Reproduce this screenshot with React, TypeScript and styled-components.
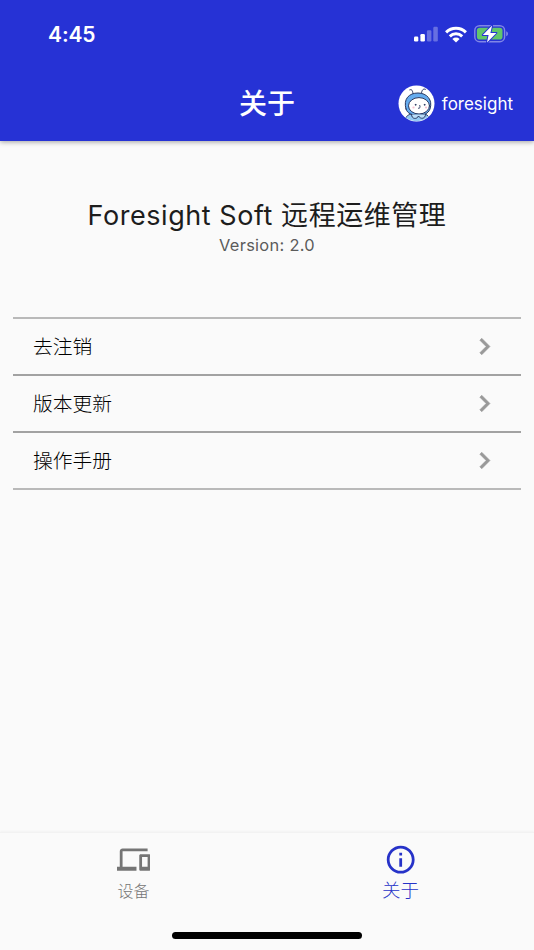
import React from "react";
import styled, { createGlobalStyle } from "styled-components";

const GlobalStyle = createGlobalStyle`
  * { box-sizing: border-box; }
  body { margin: 0; background: #fafafa; font-family: Inter, "Noto Sans CJK SC", sans-serif; }
`;

const Screen = styled.div`
  width: 534px;
  height: 950px;
  display: flex;
  flex-direction: column;
  background: #fafafa;
  overflow: hidden;
`;

const Header = styled.header`
  height: 141px;
  flex: none;
  background: #2632d5;
  color: #fff;
  box-shadow: 0 1px 5px rgba(0, 0, 0, 0.36);
`;

const StatusBar = styled.div`
  height: 66px;
  padding: 2px 25px 0 48px;
  display: flex;
  align-items: center;
  justify-content: space-between;
`;

const Clock = styled.span`
  font-size: 21px;
  font-weight: 600;
  line-height: 24px;
  letter-spacing: -0.1px;
  padding-top: 1px;
`;

const StatusIcons = styled.div`
  display: flex;
  align-items: center;
  gap: 7px;
`;

const AppBar = styled.div`
  height: 75px;
  display: grid;
  grid-template-columns: 1fr auto 1fr;
  align-items: center;
  padding: 0 21px;
`;

const PageTitle = styled.h1`
  grid-column: 2;
  margin: 0;
  font-size: 28px;
  font-weight: 500;
  line-height: 40px;
`;

const Account = styled.div`
  display: flex;
  align-items: center;
  justify-content: flex-end;
  gap: 7px;
`;

const AccountName = styled.span`
  font-size: 17px;
  line-height: 24px;
`;

const Body = styled.main`
  flex: 1;
  padding: 0 13px;
`;

const Product = styled.section`
  height: 176px;
  padding-top: 56px;
  text-align: center;
`;

const ProductName = styled.h2`
  margin: 0;
  font-size: 27px;
  font-weight: 400;
  line-height: 38px;
  letter-spacing: 0.55px;
  color: #1d1d1d;
  white-space: nowrap;
`;

const Version = styled.p`
  margin: -1px 0 0;
  font-size: 16.4px;
  line-height: 22px;
  letter-spacing: 0.3px;
  color: #5b5b5b;
`;

const Menu = styled.ul`
  list-style: none;
  margin: 0;
  padding: 0;
  border-top: 2px solid #b9b9b9;
`;

const MenuItem = styled.li`
  height: 57px;
  padding: 0 20px 1px;
  display: flex;
  align-items: center;
  justify-content: space-between;
  border-bottom: 2px solid #a2a2a2;
  &:last-child { border-bottom-color: #b9b9b9; }
`;

const MenuLabel = styled.span`
  padding-bottom: 2px;
  font-size: 19.8px;
  font-weight: 300;
  color: #000;
`;

const TabBar = styled.nav`
  height: 118px;
  flex: none;
  display: grid;
  grid-template-columns: 1fr 1fr;
  grid-template-rows: 1fr auto;
  border-top: 1px solid #f2f2f2;
  box-shadow: 0 -1px 2px rgba(0, 0, 0, 0.03);
`;

const Tab = styled.div<{ $active?: boolean }>`
  display: flex;
  flex-direction: column;
  align-items: center;
  padding-top: 10px;
  color: ${(p) => (p.$active ? "#2632c8" : "#757575")};
`;

const TabLabel = styled.span<{ $active?: boolean }>`
  font-size: ${(p) => (p.$active ? 18.5 : 16)}px;
  font-weight: 300;
  line-height: 26px;
  margin-top: ${(p) => (p.$active ? 1 : 2)}px;
`;

const HomeIndicator = styled.div`
  grid-column: 1 / -1;
  justify-self: center;
  width: 190px;
  height: 7px;
  margin-bottom: 11px;
  border-radius: 4px;
  background: #000;
`;

const Icon = ({ d }: { d: string }) => (
  <svg width="33.4" height="33.4" viewBox="0 0 24 24" fill="currentColor">
    <path d={d} />
  </svg>
);

const devices =
  "M4 6h18V4H4c-1.1 0-2 .9-2 2v11H0v3h14v-3H4V6zm19 2h-6c-.55 0-1 .45-1 1v10c0 .55.45 1 1 1h6c.55 0 1-.45 1-1V9c0-.55-.45-1-1-1zm-1 9h-4v-7h4v7z";
const info =
  "M11 7h2v2h-2zm0 4h2v6h-2zm1-9C6.48 2 2 6.48 2 12s4.48 10 10 10 10-4.48 10-10S17.52 2 12 2zm0 18c-4.41 0-8-3.59-8-8s3.59-8 8-8 8 3.59 8 8-3.59 8-8 8z";

const Chevron = () => (
  <svg width="33" height="33" viewBox="0 0 24 24" fill="#999" stroke="#999" strokeWidth="0.4">
    <path d="M10 6L8.59 7.41 13.17 12l-4.58 4.59L10 18l6-6z" />
  </svg>
);

const Signal = () => (
  <svg width="24" height="16" viewBox="0 0 24 16" fill="#fff">
    <rect x="0" y="10.5" width="4.3" height="5" rx="1.2" />
    <rect x="6.4" y="8" width="4.5" height="7.5" rx="1.2" />
    <rect x="12.9" y="4.3" width="4.5" height="11.2" rx="1.2" opacity=".3" />
    <rect x="19.3" y="0.7" width="4.5" height="14.8" rx="1.2" opacity=".3" />
  </svg>
);

const Wifi = () => (
  <svg width="22" height="17" viewBox="0 0 22 17">
    <g fill="none" stroke="#fff" strokeWidth="3">
      <path d="M1.1 6.4a14.1 14.1 0 0 1 19.8 0" />
      <path d="M4.8 10.3a8.9 8.9 0 0 1 12.4 0" />
    </g>
    <path d="M7.4 12.9a5.2 5.2 0 0 1 7.2 0L11 16.5z" fill="#fff" />
  </svg>
);

const Battery = () => (
  <svg width="35" height="20" viewBox="0 0 35 20">
    <rect x="0.8" y="1.7" width="29.8" height="16" rx="4.8" fill="none" stroke="#8086e6" strokeWidth="1.4" />
    <path d="M32.2 7.3c2.4.8 2.4 4.2 0 5z" fill="#8086e6" />
    <rect x="2.9" y="3.8" width="25.6" height="11.8" rx="2.8" fill="#62c66b" />
    <path
      d="M18.1 1.5L8.8 11h5.8l-1.6 7.5L22.4 8.9h-6z"
      fill="#fff"
      stroke="#2632d5"
      strokeWidth="2"
      strokeLinejoin="round"
      paintOrder="stroke"
    />
  </svg>
);

const Avatar = () => (
  <svg width="37" height="37" viewBox="0 0 37 37">
    <defs>
      <clipPath id="face"><circle cx="18.5" cy="18.5" r="17.7" /></clipPath>
    </defs>
    <circle cx="18.5" cy="18.5" r="18" fill="#fff" />
    <g clipPath="url(#face)" stroke="#28375f" strokeWidth="1" strokeLinecap="round" strokeLinejoin="round">
      <path d="M6 37c1-5 3.5-7 7-8h14c3 1 5.5 4 6 8z" fill="#93c9f3" />
      <path d="M8 24C5 14 11 8 20 8s15 7 12 16c-2 5-6 6-12 6S9.5 29 8 24z" fill="#65acef" />
      <ellipse cx="21" cy="20.8" rx="10.5" ry="8.2" fill="#fff" />
      <path d="M15 8.5C14.5 5.5 14 4 11.8 4.8M23.5 8C24 5 25 3.5 27.5 4.2" fill="none" />
      <path d="M13.5 29.5c0 5 5.5 5 7 1.5 2 3.5 7 3 7-1.5" fill="#b9ddf8" />
      <path d="M21.8 20.5c.6 2 .2 3-1.3 2.8" fill="none" />
      <circle cx="17.5" cy="19.8" r=".4" fill="#28375f" />
      <circle cx="26.5" cy="19.8" r=".4" fill="#28375f" />
    </g>
    <g fill="#f6bfd0">
      <circle cx="15.5" cy="22.5" r="1.1" />
      <circle cx="28" cy="22.5" r="1.1" />
    </g>
  </svg>
);

const items = ["去注销", "版本更新", "操作手册"];

export default function App() {
  return (
    <Screen>
      <GlobalStyle />
      <Header>
        <StatusBar>
          <Clock>4:45</Clock>
          <StatusIcons>
            <Signal />
            <Wifi />
            <Battery />
          </StatusIcons>
        </StatusBar>
        <AppBar>
          <PageTitle>关于</PageTitle>
          <Account>
            <Avatar />
            <AccountName>foresight</AccountName>
          </Account>
        </AppBar>
      </Header>
      <Body>
        <Product>
          <ProductName>Foresight Soft 远程运维管理</ProductName>
          <Version>Version: 2.0</Version>
        </Product>
        <Menu>
          {items.map((label) => (
            <MenuItem key={label}>
              <MenuLabel>{label}</MenuLabel>
              <Chevron />
            </MenuItem>
          ))}
        </Menu>
      </Body>
      <TabBar>
        <Tab>
          <Icon d={devices} />
          <TabLabel>设备</TabLabel>
        </Tab>
        <Tab $active>
          <Icon d={info} />
          <TabLabel $active>关于</TabLabel>
        </Tab>
        <HomeIndicator />
      </TabBar>
    </Screen>
  );
}
